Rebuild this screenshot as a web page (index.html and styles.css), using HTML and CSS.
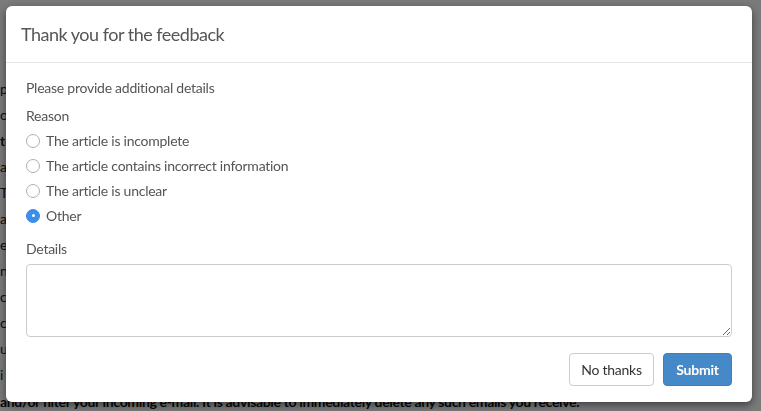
FILE: index.html
```html
<!DOCTYPE html>
<html>
<head>
<meta charset="utf-8">
<link rel="stylesheet" href="styles.css">
</head>
<body>
<div class="page">
  <p class="pg">pe</p>
  <p class="pg">of</p>
  <p class="pg strong">to</p>
  <p class="pg">a</p>
  <p class="pg">Th</p>
  <p class="pg">ar</p>
  <p class="pg">e</p>
  <p class="pg">ne</p>
  <p class="pg">ca</p>
  <p class="pg">co</p>
  <p class="pg">ui</p>
  <p class="pg">i</p>
  <p class="pg strong last">and/or filter your incoming e-mail. It is advisable to immediately delete any such emails you receive.</p>
</div>
<div class="overlay"></div>
<div class="modal">
  <div class="modal-header">
    <h4 class="modal-title">Thank you for the feedback</h4>
  </div>
  <div class="modal-body">
    <p class="intro">Please provide additional details</p>
    <div class="label">Reason</div>
    <label class="radio"><span class="circle"></span>The article is incomplete</label>
    <label class="radio"><span class="circle"></span>The article contains incorrect information</label>
    <label class="radio"><span class="circle"></span>The article is unclear</label>
    <label class="radio"><span class="circle checked"></span>Other</label>
    <div class="label details">Details</div>
    <textarea class="textarea"></textarea>
    <div class="footer">
      <button class="btn btn-default">No thanks</button>
      <button class="btn btn-primary">Submit</button>
    </div>
  </div>
</div>
</body>
</html>
```

FILE: styles.css
```css
html, body {
  margin: 0;
  padding: 0;
  height: 100%;
  overflow: hidden;
}
body {
  font-family: Lato, "Liberation Sans", sans-serif;
  background: #ffffff;
  color: #333;
}
.pg {
  margin: 0;
  font-size: 14px;
  line-height: 26px;
  height: 26px;
  color: #222;
  white-space: nowrap;
}
.pg:first-child { margin-top: 76px; }
.pg.last { margin-top: 5px; line-height: 18px; height: 18px; letter-spacing: -0.35px; color: #111; }
.strong { font-weight: bold; }
.overlay {
  position: fixed;
  inset: 0;
  background: rgba(0, 0, 0, 0.52);
}
.modal {
  position: fixed;
  left: 6px;
  top: 6px;
  width: 746px;
  height: 396px;
  background: #fff;
  border-radius: 6px;
  box-shadow: 0 3px 9px rgba(0, 0, 0, 0.5);
  box-sizing: border-box;
  color: #555;
}
.modal-header {
  height: 57px;
  box-sizing: border-box;
  border-bottom: 1px solid #e5e5e5;
  padding: 0 15px;
  display: flex;
  align-items: center;
}
.modal-title {
  margin: 0;
  font-size: 18px;
  font-weight: normal;
  color: #555;
  letter-spacing: -0.5px;
}
.modal-body {
  padding: 15px 20px 0 20px;
  font-size: 14px;
  letter-spacing: -0.25px;
}
.intro {
  margin: 0;
  line-height: 20px;
}
.label {
  margin-top: 8px;
  line-height: 20px;
  margin-bottom: 2px;
}
.radio {
  display: flex;
  align-items: center;
  height: 25px;
  line-height: 20px;
}
.circle {
  width: 12px;
  height: 12px;
  border: 1px solid #b0b0b0;
  border-radius: 50%;
  margin-right: 6px;
  flex: none;
  position: relative;
  background: #fff;
}
.circle.checked {
  background: #3b8eea;
  border-color: #3b8eea;
}
.circle.checked::after {
  content: "";
  position: absolute;
  left: 4.5px;
  top: 4.5px;
  width: 3px;
  height: 3px;
  border-radius: 50%;
  background: #fff;
}
.details {
  margin-top: 11px;
  margin-bottom: 5px;
}
.textarea {
  display: block;
  width: 706px;
  height: 73px;
  box-sizing: border-box;
  border: 1px solid #ccc;
  border-radius: 4px;
  margin: 0;
  padding: 6px 12px;
  font-family: inherit;
  font-size: 14px;
  resize: vertical;
}
.footer {
  display: flex;
  justify-content: flex-end;
  gap: 9px;
  margin-top: 16px;
}
.btn {
  height: 33px;
  font-family: inherit;
  font-size: 14px;
  letter-spacing: -0.25px;
  border-radius: 4px;
  padding: 0;
  margin: 0;
  white-space: nowrap;
  cursor: pointer;
}
.btn-default {
  background: #fff;
  border: 1px solid #ccc;
  color: #333;
  width: 85px;
}
.btn-primary {
  background: #4689c8;
  border: 1px solid #3f7fbd;
  color: #fff;
  font-weight: bold;
  width: 69px;
}
```
